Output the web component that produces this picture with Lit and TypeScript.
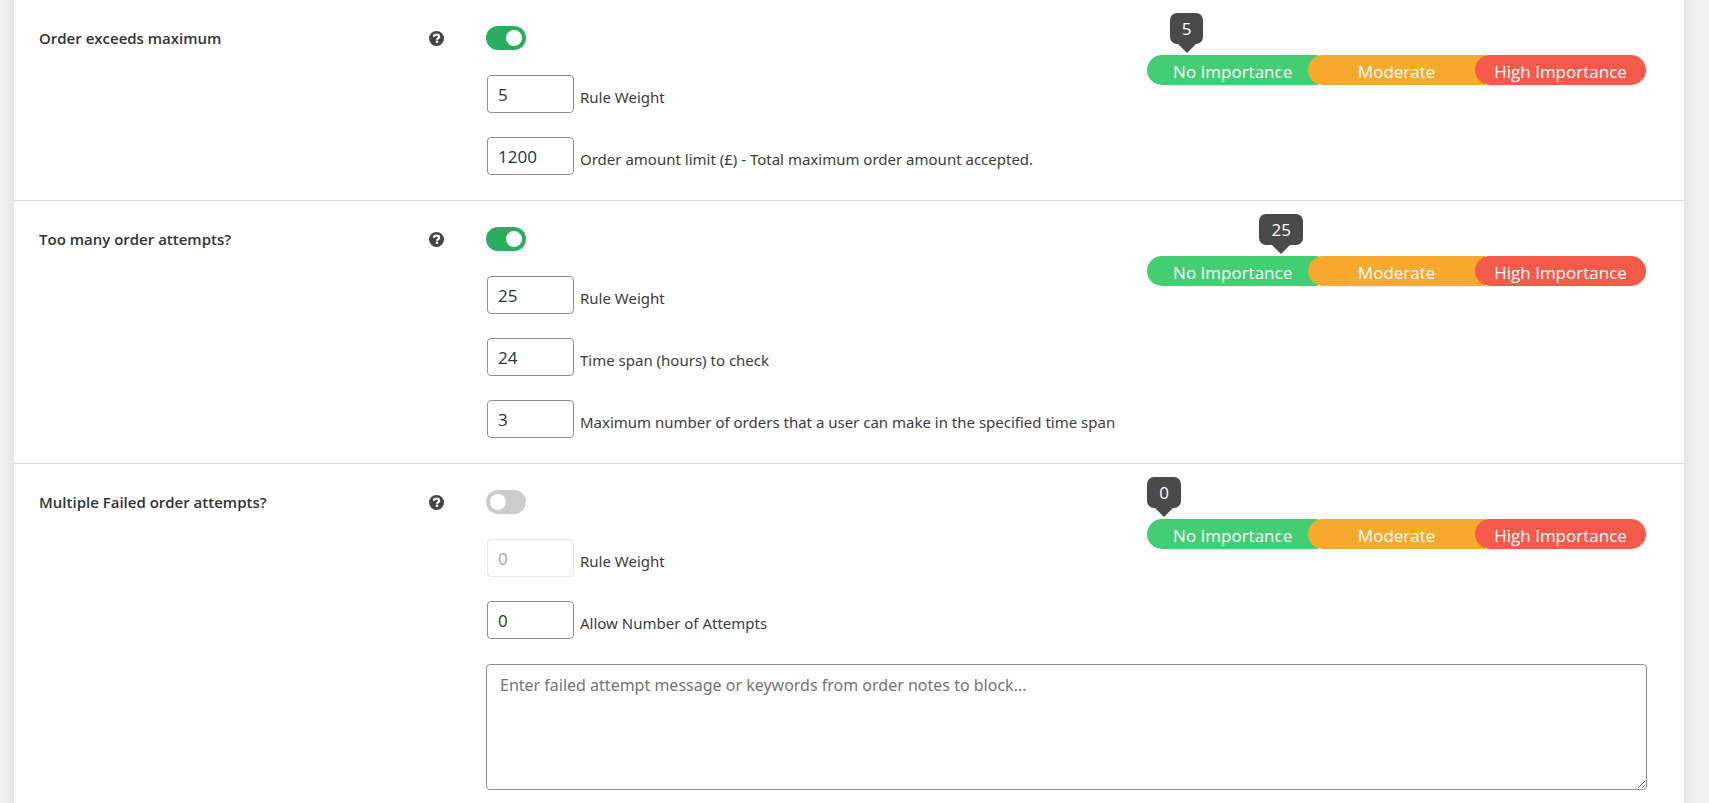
import { LitElement, html, css, nothing } from "lit";
import { customElement, property } from "lit/decorators.js";

interface Field {
  id: string;
  label: string;
  value: number;
  disabled?: boolean;
}

interface Rule {
  id: string;
  title: string;
  enabled: boolean;
  weight: number;
  fields: Field[];
  message?: string;
}

const RULES: Rule[] = [
  {
    id: "order-max",
    title: "Order exceeds maximum",
    enabled: true,
    weight: 5,
    fields: [
      { id: "order-max-weight", label: "Rule Weight", value: 5 },
      {
        id: "order-max-limit",
        label: "Order amount limit (£) - Total maximum order amount accepted.",
        value: 1200,
      },
    ],
  },
  {
    id: "many-attempts",
    title: "Too many order attempts?",
    enabled: true,
    weight: 25,
    fields: [
      { id: "many-attempts-weight", label: "Rule Weight", value: 25 },
      { id: "many-attempts-span", label: "Time span (hours) to check", value: 24 },
      {
        id: "many-attempts-count",
        label: "Maximum number of orders that a user can make in the specified time span",
        value: 3,
      },
    ],
  },
  {
    id: "failed-attempts",
    title: "Multiple Failed order attempts?",
    enabled: false,
    weight: 0,
    fields: [
      { id: "failed-attempts-weight", label: "Rule Weight", value: 0, disabled: true },
      { id: "failed-attempts-count", label: "Allow Number of Attempts", value: 0 },
    ],
    message: "Enter failed attempt message or keywords from order notes to block...",
  },
];

@customElement("importance-meter")
export class ImportanceMeter extends LitElement {
  @property({ type: Number }) value = 0;

  static styles = css`
    :host {
      display: block;
      font-family: "Open Sans", "Noto Sans", sans-serif;
      font-size: 17px;
      color: #fff;
    }
    .badge {
      position: relative;
      width: max-content;
      box-sizing: border-box;
      height: 31px;
      margin-bottom: 11px;
      padding: 0 12px;
      line-height: 32px;
      border-radius: 7px;
      background: #4a4a4a;
    }
    .badge::after {
      content: "";
      position: absolute;
      top: 100%;
      left: 50%;
      margin-left: -9px;
      border: 9px solid transparent;
      border-top-color: #4a4a4a;
      border-bottom-width: 0;
    }
    .bar {
      display: flex;
    }
    .part {
      flex: 28 1 0;
      height: 30px;
      line-height: 34px;
      text-align: center;
      white-space: nowrap;
      border-radius: 15px 0 0 15px;
    }
    .part + .part {
      margin-left: -10px;
    }
    .none {
      background: #44ce74;
    }
    .moderate {
      flex-grow: 29;
      background: #f5aa2f;
    }
    .high {
      border-radius: 15px;
      background: #f55b4b;
    }
  `;

  render() {
    return html`
      <div class="badge" style="margin-left: ${this.value * 0.9}%">${this.value}</div>
      <div class="bar">
        <div class="part none">No Importance</div>
        <div class="part moderate">Moderate</div>
        <div class="part high">High Importance</div>
      </div>
    `;
  }
}

@customElement("app-root")
export class AppRoot extends LitElement {
  static styles = css`
    :host {
      display: flex;
      box-sizing: border-box;
      min-height: 100vh;
      overflow: hidden;
      padding: 0 25px 0 14px;
      background: #f1f1f1;
      color: #3c3c3c;
      font-family: "Noto Sans", "Open Sans", sans-serif;
      font-size: 15px;
      line-height: 20px;
    }
    .panel {
      flex: 1;
      min-width: 0;
      margin: -20px 0;
      padding: 20px 0 32px;
      background: #fff;
      box-shadow: 0 0 15px rgba(0, 0, 0, 0.1);
    }
    .rule {
      display: grid;
      grid-template-columns: 405px minmax(0, 1fr);
      column-gap: 42px;
      padding: 0 37px 25px 25px;
      border-bottom: 1px solid #dcdcdc;
    }
    .rule:last-child {
      padding-bottom: 0;
      border-bottom: 0;
    }
    .head {
      display: flex;
      align-items: center;
      justify-content: space-between;
      height: 24px;
      padding-top: 26px;
    }
    .title {
      font-family: "Open Sans", "Noto Sans", sans-serif;
      font-weight: 600;
      color: #333;
    }
    .help {
      display: block;
      width: 15px;
      height: 15px;
      padding: 0;
      border: 0;
      background: none;
      color: #444;
      cursor: help;
    }
    .help svg {
      display: block;
    }
    .top {
      display: flex;
      justify-content: space-between;
      padding-right: 1px;
    }
    .controls {
      display: flex;
      flex-direction: column;
      gap: 24px;
      padding-top: 26px;
    }
    .toggle {
      appearance: none;
      box-sizing: border-box;
      width: 40px;
      height: 24px;
      margin: 0 0 1px;
      padding: 4px;
      border-radius: 12px;
      background: #ccc;
      cursor: pointer;
    }
    .toggle::before {
      content: "";
      display: block;
      width: 16px;
      height: 16px;
      border-radius: 50%;
      background: #fff;
    }
    .toggle:checked {
      background: #27ae60;
    }
    .toggle:checked::before {
      margin-left: auto;
    }
    .field {
      display: flex;
      align-items: center;
      gap: 6px;
      padding-left: 1px;
    }
    .caption {
      padding-top: 6px;
    }
    .number {
      appearance: textfield;
      box-sizing: border-box;
      width: 87px;
      height: 38px;
      margin: 0;
      padding: 0 10px;
      border: 1px solid #8c8f94;
      border-radius: 4px;
      background: #fff;
      color: #2c3338;
      font-family: "Open Sans", "Noto Sans", sans-serif;
      font-size: 17px;
    }
    .number:disabled {
      border-color: #e6e7e8;
      color: #a0a3a6;
      box-shadow: inset 0 1px 2px rgba(0, 0, 0, 0.04);
    }
    .meter {
      flex: 0 0 43%;
      padding-top: 13px;
    }
    .message {
      display: block;
      box-sizing: border-box;
      width: 100%;
      height: 126px;
      margin: 25px 0 0;
      padding: 8px 13px;
      border: 1px solid #8c8f94;
      border-radius: 4px;
      background: #fff;
      color: #2c3338;
      font-family: inherit;
      font-size: 16px;
      line-height: 24px;
      resize: both;
    }
    .message::placeholder {
      color: #757575;
    }
  `;

  private renderField(field: Field) {
    return html`
      <div class="field">
        <input
          class="number"
          type="number"
          id=${field.id}
          .value=${String(field.value)}
          ?disabled=${field.disabled}
        />
        <label class="caption" for=${field.id}>${field.label}</label>
      </div>
    `;
  }

  private renderRule(rule: Rule) {
    return html`
      <section class="rule">
        <div class="head">
          <label class="title" for=${rule.id}>${rule.title}</label>
          <button class="help" type="button" aria-label="Help">
            <svg viewBox="0 0 16 16" width="15" height="15" aria-hidden="true">
              <circle cx="8" cy="8" r="8" fill="currentColor" />
              <path
                d="M5.2 6.1C5.3 4.5 6.4 3.8 8 3.8c1.700 0 2.800.8 2.800 2.200 0 1.100-.7 1.600-1.400 2-.6.4-.8.7-.8 1.300"
                fill="none"
                stroke="#fff"
                stroke-width="2.400"
              />
              <rect x="7.300" y="10.300" width="2.500" height="2.400" fill="#fff" />
            </svg>
          </button>
        </div>
        <div class="body">
          <div class="top">
            <div class="controls">
              <input class="toggle" type="checkbox" id=${rule.id} ?checked=${rule.enabled} />
              ${rule.fields.map((field) => this.renderField(field))}
            </div>
            <importance-meter class="meter" .value=${rule.weight}></importance-meter>
          </div>
          ${rule.message
            ? html`<textarea
                class="message"
                aria-label="Failed attempt message"
                placeholder=${rule.message}
              ></textarea>`
            : nothing}
        </div>
      </section>
    `;
  }

  render() {
    return html`<main class="panel">${RULES.map((rule) => this.renderRule(rule))}</main>`;
  }
}
